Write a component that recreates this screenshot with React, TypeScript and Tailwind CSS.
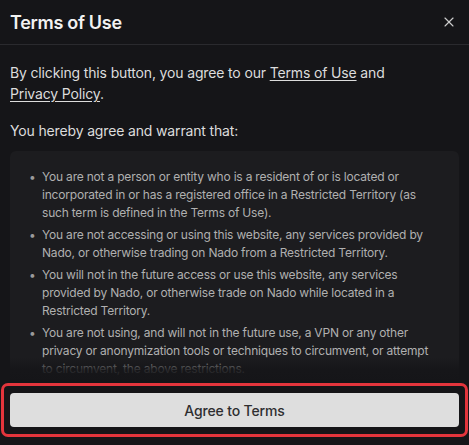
import { X } from "lucide-react";

const terms = [
  "You are not a person or entity who is a resident of or is located or incorporated in or has a registered office in a Restricted Territory (as such term is defined in the Terms of Use).",
  "You are not accessing or using this website, any services provided by Nado, or otherwise trading on Nado from a Restricted Territory.",
  "You will not in the future access or use this website, any services provided by Nado, or otherwise trade on Nado while located in a Restricted Territory.",
  "You are not using, and will not in the future use, a VPN or any other privacy or anonymization tools or techniques to circumvent, or attempt to circumvent, the above restrictions.",
];

export default function App() {
  return (
    <div
      className="flex h-[445px] w-[469px] flex-col overflow-hidden bg-[#151518] text-[#dcdcdc]"
      style={{ fontFamily: "Inter, 'Noto Sans', sans-serif" }}
    >
      <div className="flex h-[45px] shrink-0 items-center justify-between border-b border-[#2a2a2e] pl-[10px] pr-[12px]">
        <h1 className="text-[18px] font-semibold tracking-[-0.3px] text-[#f2f2f2]">Terms of Use</h1>
        <button type="button" className="text-[#cfcfcf]">
          <X className="h-[16px] w-[16px]" strokeWidth={1.6} />
        </button>
      </div>

      <div className="relative min-h-0 flex-1 overflow-hidden">
        <div className="px-[10px] pt-[17px]">
          <p className="max-w-[420px] text-[14px] leading-[21px] tracking-[-0.15px]">
            By clicking this button, you agree to our{" "}
            <a className="underline underline-offset-2">Terms of Use</a> and{" "}
            <a className="underline underline-offset-2">Privacy Policy</a>.
          </p>
          <p className="mt-[16px] text-[14px] leading-[21px] tracking-[-0.15px]">You hereby agree and warrant that:</p>

          <div className="mt-[10px] rounded-[6px] bg-[#1c1c1f] pb-[20px] pl-[19px] pr-[22px] pt-[17px]">
            <ul className="flex flex-col gap-[4px] text-[12px] leading-[18px] tracking-[-0.2px] text-[#b0b0b0]">
              {terms.map((t) => (
                <li key={t} className="flex">
                  <span className="w-[13px] shrink-0 text-[#9a9a9a]">•</span>
                  <span>{t}</span>
                </li>
              ))}
            </ul>
          </div>
        </div>
        <div className="pointer-events-none absolute inset-x-0 bottom-0 h-[26px] bg-gradient-to-b from-[#151518]/0 via-[#151518]/85 to-[#151518]" />
      </div>

      <div className="mx-[1px] mb-[8px] shrink-0 rounded-[7px] border-[3px] border-[#e3353c] px-[6px] py-[7px]">
        <button
          type="button"
          className="flex h-[34px] w-full items-center justify-center rounded-[4px] bg-[#dedede] text-[14px] font-medium tracking-[-0.15px] text-[#2e2e30]"
        >
          Agree to Terms
        </button>
      </div>
    </div>
  );
}
